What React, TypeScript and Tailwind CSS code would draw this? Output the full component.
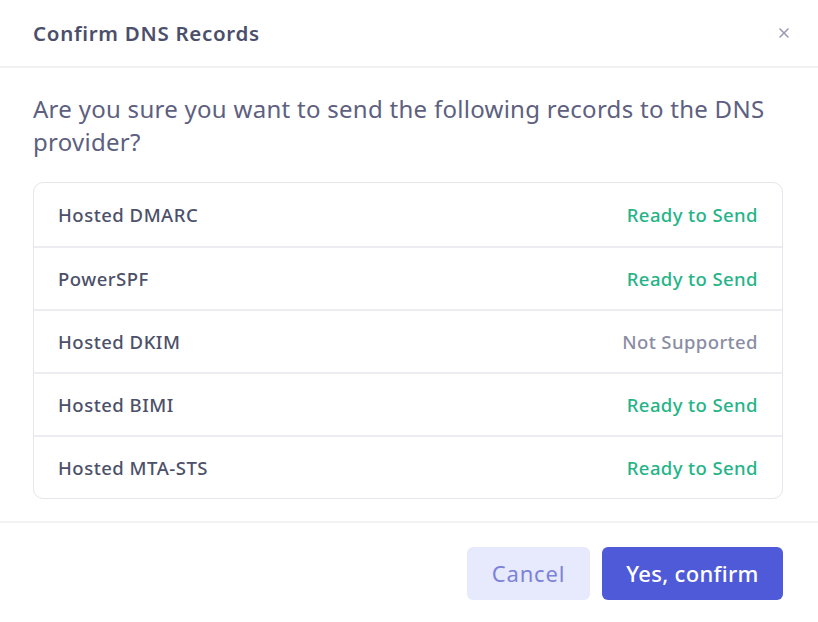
import { X } from 'lucide-react'

const records = [
  { name: 'Hosted DMARC', status: 'Ready to Send', ok: true },
  { name: 'PowerSPF', status: 'Ready to Send', ok: true },
  { name: 'Hosted DKIM', status: 'Not Supported', ok: false },
  { name: 'Hosted BIMI', status: 'Ready to Send', ok: true },
  { name: 'Hosted MTA-STS', status: 'Ready to Send', ok: true },
]

export default function App() {
  return (
    <div
      className="w-[818px] h-[622px] bg-white flex flex-col"
      style={{ fontFamily: '"Noto Sans", "Open Sans", sans-serif' }}
    >
      {/* Header */}
      <div className="h-[68px] shrink-0 flex items-center justify-between pl-[33px] pr-[26px] border-b-2 border-[#f1f1f4]">
        <h2 className="text-[20.5px] font-semibold text-[#4b4f6b] tracking-[0.7px]">Confirm DNS Records</h2>
        <button className="text-[#9a9cb6]">
          <X size={16} strokeWidth={2.4} />
        </button>
      </div>

      {/* Body */}
      <div className="px-[33px] pt-[24px] pb-[22px] border-b-2 border-[#f3f3f6]">
        <p className="text-[24px] leading-[33px] text-[#5d6080] tracking-[0.28px]">
          Are you sure you want to send the following records to the DNS provider?
        </p>
        <div className="mt-[24px] w-[750px] border border-[#e6e6ec] rounded-[10px] overflow-hidden">
          {records.map((r, i) => (
            <div
              key={r.name}
              className={`h-[63px] flex items-center justify-between px-[24px] ${
                i > 0 ? 'border-t-2 border-[#ececf1]' : ''
              }`}
            >
              <span className="text-[18.5px] font-medium text-[#4c5069] tracking-[0.5px]">{r.name}</span>
              <span
                className={`text-[18.5px] font-medium tracking-[0.4px] ${
                  r.ok ? 'text-[#25b487]' : 'text-[#8b8da3]'
                }`}
              >
                {r.status}
              </span>
            </div>
          ))}
        </div>
      </div>

      {/* Footer */}
      <div className="flex justify-end gap-[12px] pt-[24px] pr-[35px]">
        <button className="h-[53px] w-[123px] rounded-[6px] bg-[#e7e9fc] text-[#7d82d9] text-[22px] tracking-[0.8px]">
          Cancel
        </button>
        <button className="h-[53px] w-[181px] rounded-[6px] bg-[#4f5ad8] text-white text-[22px] font-medium tracking-[0.3px]">
          Yes, confirm
        </button>
      </div>
    </div>
  )
}
